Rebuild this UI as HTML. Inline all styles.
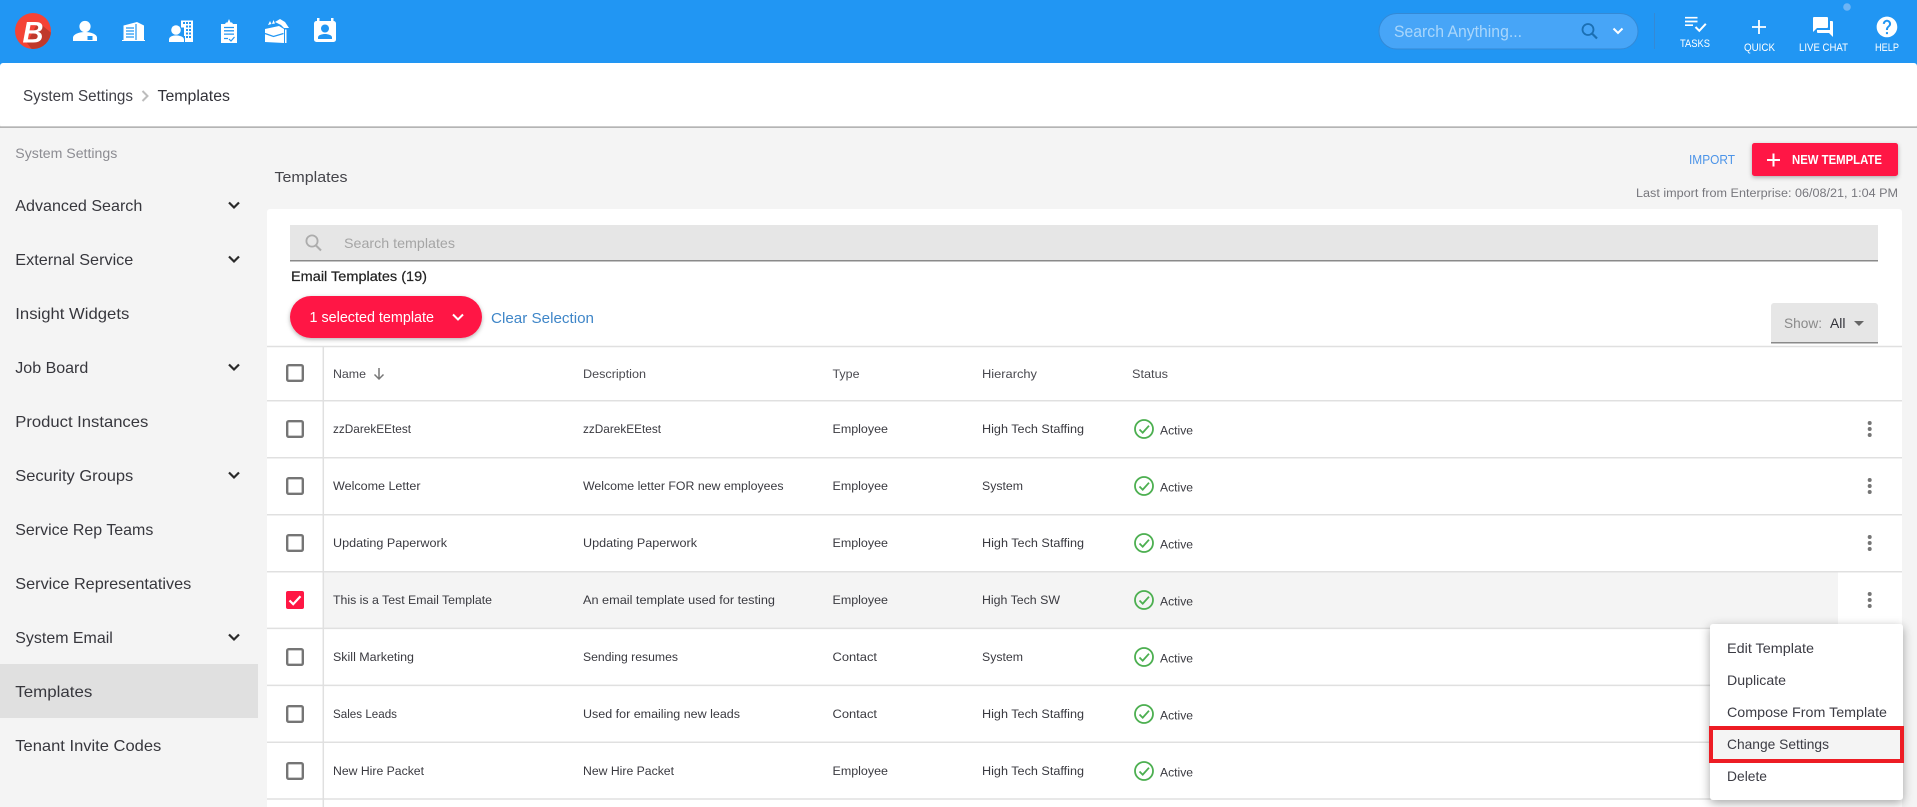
<!DOCTYPE html>
<html lang="en">
<head>
<meta charset="utf-8">
<title>Templates</title>
<style>
html,body{margin:0;padding:0;width:1917px;height:807px;overflow:hidden;background:#f4f4f4}
svg{display:block}
text{font-family:"Liberation Sans",Arial,sans-serif}
.side{font-size:16px;fill:#37373d}
.cell{font-size:12.4px;fill:#3a3a40}
.head{font-size:12.4px;fill:#4a4a50}
.act{font-size:12.4px;fill:#3a3a40}
.menu{font-size:14px;fill:#3c3c44}
.top{font-size:11px;fill:#fff}
.cb{fill:#fff;stroke:#757575;stroke-width:2.4}
.line{stroke:#e0e0e0;stroke-width:1.5}
.chev{fill:none;stroke:#2a2a2a;stroke-width:2.2}
.ok{fill:none;stroke:#4caf50;stroke-width:1.8}
</style>
</head>
<body>
<svg width="1917" height="807" viewBox="0 0 1917 807" xmlns="http://www.w3.org/2000/svg">
<defs>
<filter id="sh1" x="-10%" y="-20%" width="120%" height="150%"><feDropShadow dx="0" dy="1.5" stdDeviation="2" flood-color="#000" flood-opacity=".3"/></filter>
<filter id="sh2" x="-20%" y="-20%" width="140%" height="140%"><feDropShadow dx="0" dy="3" stdDeviation="5" flood-color="#000" flood-opacity=".35"/></filter>
<clipPath id="lg"><circle cx="33" cy="31" r="18"/></clipPath>
</defs>

<rect width="1917" height="807" fill="#f4f4f4"/>

<!-- top bar -->
<rect width="1917" height="66" fill="#2196f3"/>
<rect x="0" y="63" width="1917" height="64" rx="3" fill="#fff"/>
<rect x="0" y="126.5" width="1917" height="1.2" fill="#9a9a9a"/>

<!-- logo -->
<circle cx="33" cy="31" r="18" fill="#f44336"/>
<path clip-path="url(#lg)" d="M27 43 38 22 60 40 40 60Z" fill="#c0392b"/>
<text x="22.5" y="42.5" font-size="30" font-weight="700" font-style="italic" fill="#fff" textLength="21" lengthAdjust="spacingAndGlyphs">B</text>

<!-- nav icons -->
<g fill="#fff">
<circle cx="85" cy="26.5" r="5.6"/>
<path d="M73 41v-3.2c0-3.600 6.200-5.800 12-5.800s12 2.200 12 5.800V41z"/>
<rect x="87.500" y="36" width="5" height="4" fill="#2196f3"/>
<path d="M122 41v-1h1.500V25.500L137 22l7 3.500V40h1v1z"/>
</g>
<g stroke="#2196f3" stroke-width="1.200">
<path d="M126 28h8M126 31h8M126 34h8M126 37h8M136 24v16"/>
</g>
<g fill="#fff">
<circle cx="176" cy="30" r="4.800"/>
<path d="M169 42v-2.600c0-2.600 3.600-4 7-4s8 1.400 8 4V42z"/>
<path d="M181 20.500h12V42h-8v-6h-1v-8.500h-3zM183 22v2h2v-2zm3 0v2h2v-2zm3 0v2h2v-2zm-3 3.500v2h2v-2zm3 0v2h2v-2zm-3 3.500v2h2v-2zm3 0v2h2v-2zm-3 3.500v2h2v-2zm3 0v2h2v-2zm-3 3.500v2h2v-2zm3 0v2h2v-2z" fill-rule="evenodd"/>
<path d="M226 22.500h1.500L229 19l1.500 3.500h1.500l1 1.500h4v19h-16V24h4z"/>
</g>
<path d="M224 27.500h10M224 30.800h10M224 34.100h10M224 38.500h4" stroke="#2196f3" stroke-width="1.300" fill="none"/>
<path d="M229 39l2 2 3.500-4" stroke="#2196f3" stroke-width="1.200" fill="none"/>
<g fill="#fff">
<path d="M265 29l14-3 5 3v14l-19-1z"/>
<path d="M285 29.500h1.500v13.500H285zM268 25l2-4 1.500 3zM272 24l1.500-4 1.500 3.500zM275 22l5-3 5 3 4 6h-5l-3-3z"/>
</g>
<path d="M265 33.500l8.500 3 10-3" stroke="#2196f3" stroke-width="1.200" fill="none"/>
<rect x="314" y="21" width="22" height="21" rx="2.500" fill="#fff"/>
<rect x="317" y="18" width="2.500" height="4" fill="#fff"/>
<rect x="331" y="18" width="2.500" height="4" fill="#fff"/>
<circle cx="325" cy="28.500" r="4" fill="#2196f3"/>
<path d="M318 39v-1.500c0-2.500 4-3.500 7-3.500s7 1 7 3.500V39z" fill="#2196f3"/>

<!-- global search -->
<rect x="1379" y="13.500" width="259" height="35.500" rx="17.700" fill="#47a5f7" stroke="#3389d6" stroke-width="1"/>
<text x="1394" y="37" font-size="17" fill="#a9d6fb" textLength="128" lengthAdjust="spacingAndGlyphs">Search Anything...</text>
<circle cx="1588" cy="29.500" r="5.500" fill="none" stroke="#1b6fb3" stroke-width="1.800"/>
<path d="M1592 33.500l5 5" stroke="#1b6fb3" stroke-width="2.200"/>
<path d="M1613.500 28.500l4.500 4.500 4.500-4.500" fill="none" stroke="#fff" stroke-width="2"/>
<rect x="1654" y="13" width="1" height="36" fill="#3589d4"/>

<!-- top right actions -->
<path d="M1685 17.700h12.500M1685 21.500h12.500M1685 25.200h8" stroke="#fff" stroke-width="1.700"/>
<path d="M1695.500 27l3.800 3.800 6.500-7" fill="none" stroke="#fff" stroke-width="2"/>
<text class="top" x="1680" y="47" textLength="30" lengthAdjust="spacingAndGlyphs">TASKS</text>
<path d="M1752 27h14M1759 20v14" stroke="#fff" stroke-width="1.800"/>
<text class="top" x="1744" y="51" textLength="31" lengthAdjust="spacingAndGlyphs">QUICK</text>
<path transform="translate(1811 15)" fill="#fff" d="M21 6h-2v9H6v2c0 .55.45 1 1 1h11l4 4V7c0-.55-.45-1-1-1zm-4 6V3c0-.55-.45-1-1-1H3c-.55 0-1 .45-1 1v14l4-4h10c.55 0 1-.45 1-1z"/>
<text class="top" x="1799" y="51" textLength="49" lengthAdjust="spacingAndGlyphs">LIVE CHAT</text>
<path transform="translate(1874.600 14.600) scale(1.030)" fill="#fff" d="M12 2C6.480 2 2 6.480 2 12s4.480 10 10 10 10-4.480 10-10S17.520 2 12 2zm1 17h-2v-2h2v2zm2.070-7.750l-.9.920C13.450 12.900 13 13.500 13 15h-2v-.5c0-1.100.45-2.100 1.170-2.830l1.240-1.260c.37-.36.59-.86.59-1.410 0-1.100-.9-2-2-2s-2 .9-2 2H8c0-2.210 1.790-4 4-4s4 1.790 4 4c0 .88-.36 1.680-.93 2.250z"/>
<text class="top" x="1875" y="51" textLength="24" lengthAdjust="spacingAndGlyphs">HELP</text>
<circle cx="1847" cy="7" r="3.800" fill="#6db4f5"/>

<!-- breadcrumb -->
<text x="23" y="101" font-size="15.500" fill="#3f3f46" textLength="110" lengthAdjust="spacingAndGlyphs">System Settings</text>
<path d="M142.500 91l5 5-5 5" fill="none" stroke="#bdbdbd" stroke-width="2"/>
<text x="157.500" y="101" font-size="15.500" fill="#33333a" textLength="72.500" lengthAdjust="spacingAndGlyphs">Templates</text>

<!-- sidebar -->
<text x="15.300" y="158" font-size="13.500" fill="#8c8c92" textLength="102" lengthAdjust="spacingAndGlyphs">System Settings</text>
<rect x="0" y="664" width="258" height="54" fill="#e0e0e0"/>
<text class="side" x="15.300" y="211" textLength="127" lengthAdjust="spacingAndGlyphs">Advanced Search</text>
<text class="side" x="15.300" y="265" textLength="118" lengthAdjust="spacingAndGlyphs">External Service</text>
<text class="side" x="15.300" y="319" textLength="114" lengthAdjust="spacingAndGlyphs">Insight Widgets</text>
<text class="side" x="15.300" y="373" textLength="73" lengthAdjust="spacingAndGlyphs">Job Board</text>
<text class="side" x="15.300" y="427" textLength="133" lengthAdjust="spacingAndGlyphs">Product Instances</text>
<text class="side" x="15.300" y="481" textLength="118" lengthAdjust="spacingAndGlyphs">Security Groups</text>
<text class="side" x="15.300" y="535" textLength="138" lengthAdjust="spacingAndGlyphs">Service Rep Teams</text>
<text class="side" x="15.300" y="589" textLength="176" lengthAdjust="spacingAndGlyphs">Service Representatives</text>
<text class="side" x="15.300" y="643" textLength="97.500" lengthAdjust="spacingAndGlyphs">System Email</text>
<text class="side" x="15.300" y="697" textLength="77" lengthAdjust="spacingAndGlyphs">Templates</text>
<text class="side" x="15.300" y="751" textLength="146" lengthAdjust="spacingAndGlyphs">Tenant Invite Codes</text>
<path class="chev" d="M229 202.500l5 5 5-5M229 256.500l5 5 5-5M229 364.500l5 5 5-5M229 472.500l5 5 5-5M229 634.500l5 5 5-5"/>

<!-- page header -->
<text x="274.500" y="182" font-size="14.500" fill="#44444a" textLength="73" lengthAdjust="spacingAndGlyphs">Templates</text>
<text x="1689" y="164" font-size="12.500" fill="#4c94e8" textLength="46" lengthAdjust="spacingAndGlyphs">IMPORT</text>
<rect x="1752" y="143" width="146" height="33" rx="2.500" fill="#ff1744" filter="url(#sh1)"/>
<path d="M1767 160h13M1773.500 153.500v13" stroke="#fff" stroke-width="2"/>
<text x="1792" y="164" font-size="12.500" font-weight="700" fill="#fff" textLength="90" lengthAdjust="spacingAndGlyphs">NEW TEMPLATE</text>
<text x="1636" y="197" font-size="11.500" fill="#77777d" textLength="262" lengthAdjust="spacingAndGlyphs">Last import from Enterprise: 06/08/21, 1:04 PM</text>

<!-- card -->
<rect x="267" y="209" width="1635" height="620" rx="3" fill="#fff"/>
<rect x="290" y="225" width="1588" height="36" fill="#e6e6e6"/>
<rect x="290" y="260" width="1588" height="1.500" fill="#8a8a8a"/>
<circle cx="312" cy="241" r="5.600" fill="none" stroke="#acacac" stroke-width="1.800"/>
<path d="M316 245.500l5 5" stroke="#acacac" stroke-width="2"/>
<text x="344" y="248" font-size="14" fill="#a5a5a5" textLength="111" lengthAdjust="spacingAndGlyphs">Search templates</text>
<text x="291" y="281" font-size="13.500" fill="#222" stroke="#222" stroke-width=".2" textLength="136" lengthAdjust="spacingAndGlyphs">Email Templates (19)</text>

<rect x="290" y="296" width="192" height="42" rx="21" fill="#ff1744" filter="url(#sh1)"/>
<text x="309.500" y="322" font-size="14.600" fill="#fff" textLength="124.500" lengthAdjust="spacingAndGlyphs">1 selected template</text>
<path d="M453 314.500l5 5 5-5" fill="none" stroke="#fff" stroke-width="2"/>
<text x="491" y="323" font-size="15" fill="#3f86c8" textLength="103" lengthAdjust="spacingAndGlyphs">Clear Selection</text>

<path d="M1771 343v-37a3 3 0 0 1 3-3h101a3 3 0 0 1 3 3v37z" fill="#e6e6e6"/>
<rect x="1771" y="342" width="107" height="1.500" fill="#8a8a8a"/>
<text x="1784" y="328" font-size="13.500" fill="#8a8a8a" textLength="38" lengthAdjust="spacingAndGlyphs">Show:</text>
<text x="1830" y="328" font-size="13.500" fill="#33333a" textLength="15.500" lengthAdjust="spacingAndGlyphs">All</text>
<path d="M1854 321h10l-5 5z" fill="#666"/>

<!-- highlighted row -->
<rect x="323.500" y="572" width="1514.500" height="56" fill="#f4f4f4"/>

<!-- table rules -->
<path class="line" d="M267 346.500H1902M267 400.700H1902M267 457.700H1902M267 514.700H1902M267 571.700H1902M267 628.400H1902M267 685.400H1902M267 742.300H1902M267 799H1902M323.300 346V807"/>

<!-- checkboxes -->
<rect class="cb" x="287.200" y="365.200" width="15.600" height="15.600" rx="1.500"/>
<rect class="cb" x="287.200" y="421.200" width="15.600" height="15.600" rx="1.500"/>
<rect class="cb" x="287.200" y="478.200" width="15.600" height="15.600" rx="1.500"/>
<rect class="cb" x="287.200" y="535.200" width="15.600" height="15.600" rx="1.500"/>
<rect x="286" y="591" width="18" height="18" rx="2" fill="#ff1744"/>
<path d="M289.500 600.500l3.700 3.700 7.300-8" fill="none" stroke="#fff" stroke-width="2.200"/>
<rect class="cb" x="287.200" y="649.200" width="15.600" height="15.600" rx="1.500"/>
<rect class="cb" x="287.200" y="706.200" width="15.600" height="15.600" rx="1.500"/>
<rect class="cb" x="287.200" y="763.200" width="15.600" height="15.600" rx="1.500"/>

<!-- header -->
<text class="head" x="333" y="378" textLength="33" lengthAdjust="spacingAndGlyphs">Name</text>
<path d="M379 368v11M374.500 374.500l4.500 4.500 4.500-4.500" fill="none" stroke="#777" stroke-width="1.500"/>
<text class="head" x="583" y="378" textLength="63" lengthAdjust="spacingAndGlyphs">Description</text>
<text class="head" x="832.500" y="378" textLength="27" lengthAdjust="spacingAndGlyphs">Type</text>
<text class="head" x="982" y="378" textLength="55" lengthAdjust="spacingAndGlyphs">Hierarchy</text>
<text class="head" x="1132" y="378" textLength="36" lengthAdjust="spacingAndGlyphs">Status</text>

<!-- rows -->
<text class="cell" x="333" y="433" textLength="78" lengthAdjust="spacingAndGlyphs">zzDarekEEtest</text>
<text class="cell" x="583" y="433" textLength="78" lengthAdjust="spacingAndGlyphs">zzDarekEEtest</text>
<text class="cell" x="832.500" y="433" textLength="55.500" lengthAdjust="spacingAndGlyphs">Employee</text>
<text class="cell" x="982" y="433" textLength="102" lengthAdjust="spacingAndGlyphs">High Tech Staffing</text>

<text class="cell" x="333" y="490" textLength="87.500" lengthAdjust="spacingAndGlyphs">Welcome Letter</text>
<text class="cell" x="583" y="490" textLength="200.500" lengthAdjust="spacingAndGlyphs">Welcome letter FOR new employees</text>
<text class="cell" x="832.500" y="490" textLength="55.500" lengthAdjust="spacingAndGlyphs">Employee</text>
<text class="cell" x="982" y="490" textLength="41" lengthAdjust="spacingAndGlyphs">System</text>

<text class="cell" x="333" y="547" textLength="114" lengthAdjust="spacingAndGlyphs">Updating Paperwork</text>
<text class="cell" x="583" y="547" textLength="114" lengthAdjust="spacingAndGlyphs">Updating Paperwork</text>
<text class="cell" x="832.500" y="547" textLength="55.500" lengthAdjust="spacingAndGlyphs">Employee</text>
<text class="cell" x="982" y="547" textLength="102" lengthAdjust="spacingAndGlyphs">High Tech Staffing</text>

<text class="cell" x="333" y="604" textLength="159" lengthAdjust="spacingAndGlyphs">This is a Test Email Template</text>
<text class="cell" x="583" y="604" textLength="192" lengthAdjust="spacingAndGlyphs">An email template used for testing</text>
<text class="cell" x="832.500" y="604" textLength="55.500" lengthAdjust="spacingAndGlyphs">Employee</text>
<text class="cell" x="982" y="604" textLength="78" lengthAdjust="spacingAndGlyphs">High Tech SW</text>

<text class="cell" x="333" y="661" textLength="81" lengthAdjust="spacingAndGlyphs">Skill Marketing</text>
<text class="cell" x="583" y="661" textLength="95" lengthAdjust="spacingAndGlyphs">Sending resumes</text>
<text class="cell" x="832.500" y="661" textLength="44.500" lengthAdjust="spacingAndGlyphs">Contact</text>
<text class="cell" x="982" y="661" textLength="41" lengthAdjust="spacingAndGlyphs">System</text>

<text class="cell" x="333" y="718" textLength="64" lengthAdjust="spacingAndGlyphs">Sales Leads</text>
<text class="cell" x="583" y="718" textLength="157" lengthAdjust="spacingAndGlyphs">Used for emailing new leads</text>
<text class="cell" x="832.500" y="718" textLength="44.500" lengthAdjust="spacingAndGlyphs">Contact</text>
<text class="cell" x="982" y="718" textLength="102" lengthAdjust="spacingAndGlyphs">High Tech Staffing</text>

<text class="cell" x="333" y="775" textLength="91" lengthAdjust="spacingAndGlyphs">New Hire Packet</text>
<text class="cell" x="583" y="775" textLength="91" lengthAdjust="spacingAndGlyphs">New Hire Packet</text>
<text class="cell" x="832.500" y="775" textLength="55.500" lengthAdjust="spacingAndGlyphs">Employee</text>
<text class="cell" x="982" y="775" textLength="102" lengthAdjust="spacingAndGlyphs">High Tech Staffing</text>

<!-- status -->
<g class="ok">
<circle cx="1144" cy="429" r="9"/><path d="M1139.500 429.500l3.200 3.200 6.300-7"/>
<circle cx="1144" cy="486" r="9"/><path d="M1139.500 486.500l3.200 3.200 6.300-7"/>
<circle cx="1144" cy="543" r="9"/><path d="M1139.500 543.500l3.200 3.200 6.300-7"/>
<circle cx="1144" cy="600" r="9"/><path d="M1139.500 600.500l3.200 3.200 6.300-7"/>
<circle cx="1144" cy="657" r="9"/><path d="M1139.500 657.500l3.200 3.200 6.300-7"/>
<circle cx="1144" cy="714" r="9"/><path d="M1139.500 714.500l3.200 3.200 6.300-7"/>
<circle cx="1144" cy="771" r="9"/><path d="M1139.500 771.500l3.200 3.200 6.300-7"/>
</g>
<text class="act" x="1160" y="434.300" textLength="33" lengthAdjust="spacingAndGlyphs">Active</text>
<text class="act" x="1160" y="491.300" textLength="33" lengthAdjust="spacingAndGlyphs">Active</text>
<text class="act" x="1160" y="548.300" textLength="33" lengthAdjust="spacingAndGlyphs">Active</text>
<text class="act" x="1160" y="605.300" textLength="33" lengthAdjust="spacingAndGlyphs">Active</text>
<text class="act" x="1160" y="662.300" textLength="33" lengthAdjust="spacingAndGlyphs">Active</text>
<text class="act" x="1160" y="719.300" textLength="33" lengthAdjust="spacingAndGlyphs">Active</text>
<text class="act" x="1160" y="776.300" textLength="33" lengthAdjust="spacingAndGlyphs">Active</text>

<!-- kebabs -->
<g fill="#757575">
<circle cx="1869.700" cy="423" r="2"/><circle cx="1869.700" cy="429" r="2"/><circle cx="1869.700" cy="435" r="2"/>
<circle cx="1869.700" cy="480" r="2"/><circle cx="1869.700" cy="486" r="2"/><circle cx="1869.700" cy="492" r="2"/>
<circle cx="1869.700" cy="537" r="2"/><circle cx="1869.700" cy="543" r="2"/><circle cx="1869.700" cy="549" r="2"/>
<circle cx="1869.700" cy="594" r="2"/><circle cx="1869.700" cy="600" r="2"/><circle cx="1869.700" cy="606" r="2"/>
</g>

<!-- menu -->
<rect x="1710" y="624" width="193" height="176" rx="3" fill="#fff" filter="url(#sh2)"/>
<text class="menu" x="1727" y="653" textLength="87" lengthAdjust="spacingAndGlyphs">Edit Template</text>
<text class="menu" x="1727" y="685" textLength="59" lengthAdjust="spacingAndGlyphs">Duplicate</text>
<text class="menu" x="1727" y="717" textLength="160" lengthAdjust="spacingAndGlyphs">Compose From Template</text>
<rect x="1711" y="728" width="191" height="33" fill="#f4f4f4" stroke="#ed1c24" stroke-width="4"/>
<text class="menu" x="1727" y="749" textLength="102" lengthAdjust="spacingAndGlyphs">Change Settings</text>
<text class="menu" x="1727" y="781" textLength="40" lengthAdjust="spacingAndGlyphs">Delete</text>
</svg>
</body>
</html>
